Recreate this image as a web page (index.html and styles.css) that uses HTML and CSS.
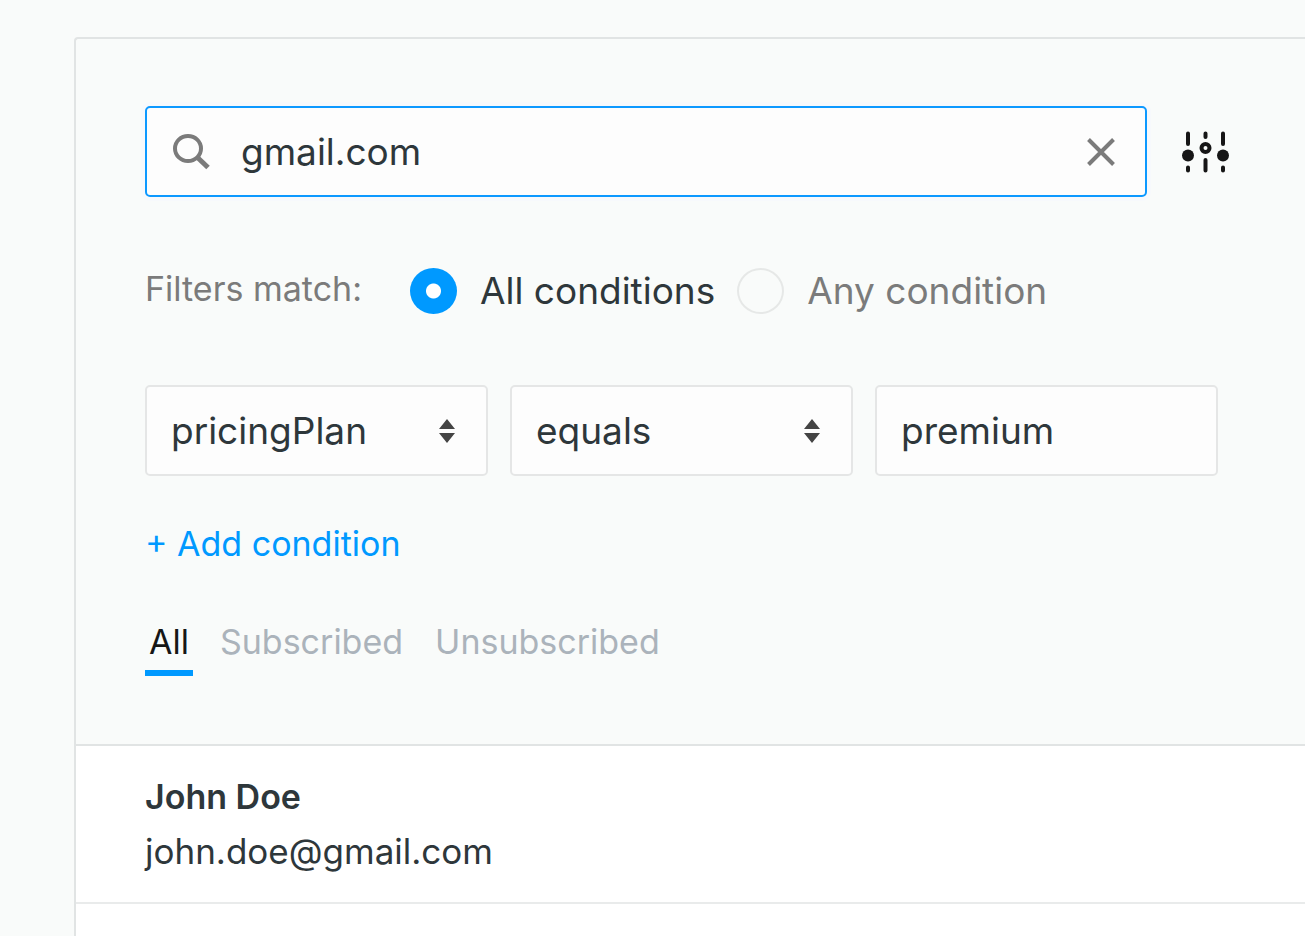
FILE: index.html
```html
<!DOCTYPE html>
<html lang="en">
<head>
<meta charset="utf-8">
<meta name="viewport" content="width=device-width, initial-scale=1">
<title>Contacts</title>
<link rel="stylesheet" href="styles.css">
</head>
<body>
<main class="panel">
  <form class="filters">
    <div class="search-row">
      <div class="search">
        <svg class="search-icon" viewBox="0 0 38 38" aria-hidden="true">
          <ellipse cx="15" cy="15.500" rx="13" ry="12.500"/>
          <path class="search-handle" d="M24.500 24.500l10.500 10"/>
        </svg>
        <input class="search-input" type="text" value="gmail.com" aria-label="Search contacts">
        <button class="clear" type="button" aria-label="Clear search">
          <svg class="clear-icon" viewBox="0 0 28 28" aria-hidden="true"><path d="M1.500 1.500l25 25M26.500 1.500l-25 25"/></svg>
        </button>
      </div>
      <button class="tune" type="button" aria-label="Toggle filters">
        <svg class="tune-icon" viewBox="0 0 48 42" aria-hidden="true">
          <path class="tune-line" d="M6 2.500v10.500M6 36.500v3M23.500 2.500v3.500M23.500 29v10.500M41 2.500v10.500M41 36.500v3"/>
          <circle cx="6" cy="24.500" r="6"/>
          <circle cx="41" cy="24.500" r="6"/>
          <circle class="tune-ring" cx="23.500" cy="17" r="4"/>
        </svg>
      </button>
    </div>

    <div class="match" role="radiogroup" aria-labelledby="match-label">
      <span class="match-label" id="match-label">Filters match:</span>
      <label class="option"><input class="radio" type="radio" name="match" checked><span>All conditions</span></label>
      <label class="option"><input class="radio" type="radio" name="match"><span>Any condition</span></label>
    </div>

    <div class="conditions">
      <div class="select-wrap">
        <select class="field" aria-label="Property"><option>pricingPlan</option></select>
        <svg class="arrows" viewBox="0 0 16 24" aria-hidden="true"><path d="M8 0l8 10H0zM8 24l8-10H0z"/></svg>
      </div>
      <div class="select-wrap">
        <select class="field" aria-label="Operator"><option>equals</option></select>
        <svg class="arrows" viewBox="0 0 16 24" aria-hidden="true"><path d="M8 0l8 10H0zM8 24l8-10H0z"/></svg>
      </div>
      <input class="field" type="text" value="premium" aria-label="Value">
    </div>

    <button class="add" type="button">+ Add condition</button>

    <nav class="tabs" aria-label="Subscription status">
      <a class="tab tab-active" href="#all" aria-current="page">All</a>
      <a class="tab" href="#subscribed">Subscribed</a>
      <a class="tab" href="#unsubscribed">Unsubscribed</a>
    </nav>
  </form>

  <ul class="contacts">
    <li class="contact">
      <span class="name">John Doe</span>
      <span class="email">john.doe@gmail.com</span>
    </li>
  </ul>
</main>
</body>
</html>
```
FILE: styles.css
```css
* { box-sizing: border-box; }

body {
  margin: 0;
  min-height: 100vh;
  display: flex;
  padding: 37px 0 0 74px;
  background: #f9fbfa;
  color: #2e373b;
  font-family: Inter, "Open Sans", sans-serif;
  font-size: 34px;
  line-height: 48px;
}

button, input, select { font: inherit; color: inherit; }

button {
  padding: 0;
  border: 0;
  background: none;
  cursor: pointer;
}

.panel {
  flex: 1;
  display: flex;
  flex-direction: column;
  min-width: 0;
  border: 2px solid #e1e4e4;
  border-width: 2px 0 0 2px;
  border-radius: 4px 0 0 0;
}

.filters {
  display: flex;
  flex-direction: column;
  align-items: stretch;
  padding: 67px 75px 68px 69px;
  border-bottom: 2px solid #e1e4e4;
}

.search-row {
  display: flex;
  align-items: center;
  gap: 35px;
}

.search {
  flex: 1;
  display: flex;
  align-items: center;
  min-width: 0;
  height: 91px;
  padding: 0 30px 0 26px;
  border: 2px solid #0d99ff;
  border-radius: 5px;
  background: #fdfdfd;
  box-shadow: 0 0 0 4px #f7f9fc;
}

.search-icon {
  flex: none;
  width: 38px;
  height: 38px;
  margin-right: 30px;
  fill: none;
  stroke: #7b7b7b;
  stroke-width: 4;
}

.search-handle { stroke-width: 5; }

.search-input {
  flex: 1;
  min-width: 0;
  padding: 0;
  border: 0;
  outline: 0;
  background: none;
  font-size: 37px;
}

.clear, .tune { display: flex; }

.clear-icon {
  width: 28px;
  height: 28px;
  fill: none;
  stroke: #7b7b7b;
  stroke-width: 4;
}

.tune-icon {
  width: 48px;
  height: 42px;
  fill: #161616;
}

.tune-line {
  fill: none;
  stroke: #161616;
  stroke-width: 4;
  stroke-linecap: round;
}

.tune-ring {
  fill: none;
  stroke: #161616;
  stroke-width: 4;
}

.match {
  display: flex;
  align-items: center;
  gap: 22px;
  margin-top: 70px;
  color: #7b7b7b;
}

.match-label {
  margin: -4px 26px 0 0;
}

.option {
  display: flex;
  align-items: center;
  gap: 23px;
  font-size: 37px;
}

.option:has(:checked) { color: #2e373b; }

.radio {
  appearance: none;
  width: 47px;
  height: 46px;
  margin: 0;
  border: 2px solid #e6e8e7;
  border-radius: 50%;
}

.radio:checked {
  border: 0;
  background: radial-gradient(circle, #fff 7px, #0099ff 8px);
}

.conditions {
  display: grid;
  grid-template-columns: repeat(3, minmax(0, 1fr));
  gap: 22px;
  margin: 70px 12px 0 0;
}

.select-wrap { position: relative; }

.field {
  display: block;
  appearance: none;
  width: 100%;
  height: 91px;
  padding: 0 24px;
  border: 2px solid #e5e6e6;
  border-radius: 5px;
  background: #fdfdfd;
  font-size: 37px;
}

.arrows {
  position: absolute;
  top: 34px;
  right: 33px;
  width: 16px;
  height: 24px;
  fill: #444;
  pointer-events: none;
}

.add {
  align-self: flex-start;
  margin-top: 44px;
  color: #0099ff;
}

.tabs {
  display: flex;
  gap: 22px;
  margin-top: 50px;
}

.tab {
  padding: 0 5px 4px;
  border-bottom: 6px solid transparent;
  color: #abb3bb;
  text-decoration: none;
}

.tab-active {
  padding: 0 4px 4px;
  border-color: #0099ff;
  color: #161616;
}

.contacts {
  flex: 1;
  margin: 0;
  padding: 0;
  background: #fff;
  list-style: none;
}

.contact {
  display: flex;
  flex-direction: column;
  gap: 6px;
  padding: 27px 69px;
  border-bottom: 2px solid #e9ebeb;
}

.name { font-weight: 600; }

.email { font-size: 35px; }
```
